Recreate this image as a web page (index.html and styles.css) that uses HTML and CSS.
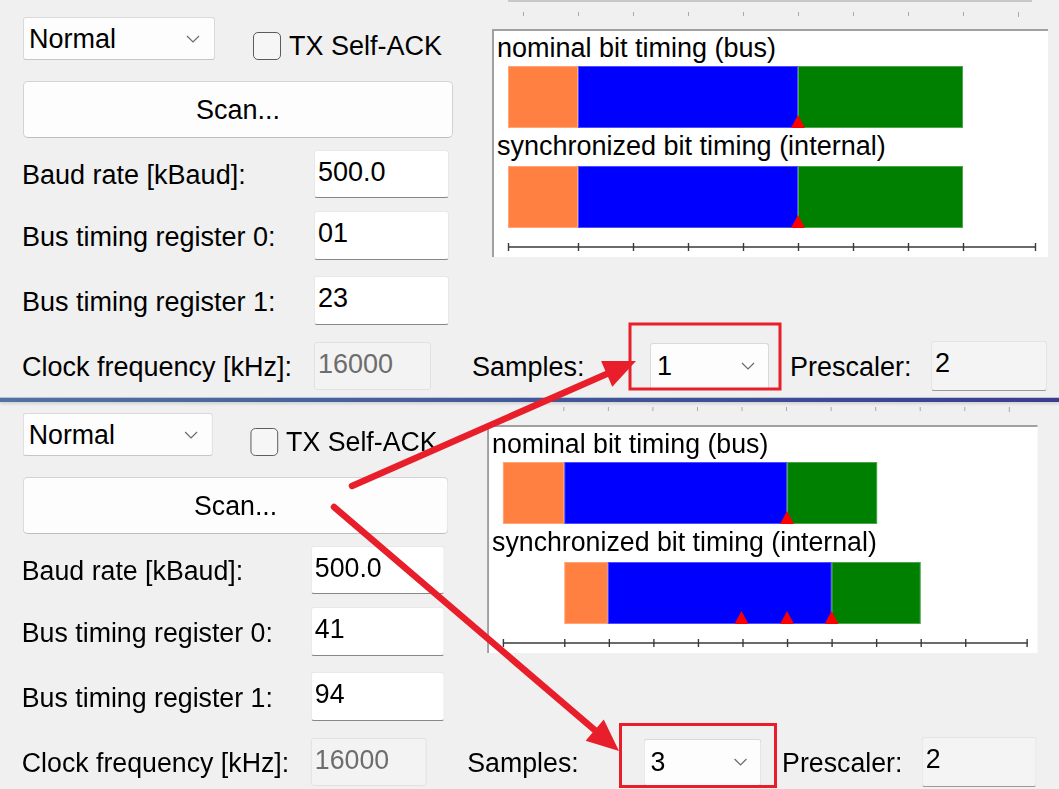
FILE: index.html
```html
<!DOCTYPE html>
<html lang="en">
<head>
<meta charset="utf-8">
<title>Bit timing</title>
<link rel="stylesheet" href="styles.css">
</head>
<body>
<main class="page">
  <section class="shot shot-a">
    <div class="upper">
      <div class="controls">
        <div class="mode-row">
          <div class="combo combo-mode"><span>Normal</span><svg class="chev" viewBox="0 0 14 8" width="14" height="8"><polyline points="1,1 7,7 13,1"/></svg></div>
          <div class="check"><span class="box"></span><span>TX Self-ACK</span></div>
        </div>
        <div class="scan">Scan...</div>
        <div class="field field-baud"><span class="lbl">Baud rate [kBaud]:</span><div class="input">500.0</div></div>
        <div class="field field-r0"><span class="lbl">Bus timing register 0:</span><div class="input">01</div></div>
        <div class="field field-r1"><span class="lbl">Bus timing register 1:</span><div class="input">23</div></div>
      </div>
      <div class="chart-col">
        <div class="slider">
          <div class="track"></div>
          <div class="ticks ticks-a"><i></i><i></i><i></i><i></i><i></i><i></i><i></i><i></i><i></i><i class="tall"></i></div>
        </div>
        <div class="chart">
          <div class="title">nominal bit timing (bus)</div>
          <div class="bar">
            <span class="seg seg-sync" style="width:70px"></span><span class="seg seg-prop" style="width:220px"></span><span class="seg seg-ps2" style="width:165px"></span>
            <span class="marker" style="left:283px"></span>
          </div>
          <div class="title title-2">synchronized bit timing (internal)</div>
          <div class="bar bar-2">
            <span class="seg seg-sync" style="width:70px"></span><span class="seg seg-prop" style="width:220px"></span><span class="seg seg-ps2" style="width:165px"></span>
            <span class="marker" style="left:283px"></span>
          </div>
          <svg class="axis" viewBox="0 0 554 16" width="554" height="16">
            <line x1="14" y1="8" x2="542" y2="8"/>
            <line x1="14.5" y1="4" x2="14.5" y2="12"/><line x1="84.5" y1="4" x2="84.5" y2="12"/><line x1="139.5" y1="4" x2="139.5" y2="12"/><line x1="194.5" y1="4" x2="194.5" y2="12"/><line x1="249.5" y1="4" x2="249.5" y2="12"/><line x1="304.5" y1="4" x2="304.5" y2="12"/><line x1="359.5" y1="4" x2="359.5" y2="12"/><line x1="414.5" y1="4" x2="414.5" y2="12"/><line x1="469.5" y1="4" x2="469.5" y2="12"/><line x1="541.5" y1="4" x2="541.5" y2="12"/>
          </svg>
        </div>
      </div>
    </div>
    <div class="bottom-row">
      <span class="lbl">Clock frequency [kHz]:</span>
      <div class="input input-disabled">16000</div>
      <span class="lbl-samples">Samples:</span>
      <div class="combo combo-samples"><span>1</span><svg class="chev" viewBox="0 0 14 8" width="14" height="8"><polyline points="1,1 7,7 13,1"/></svg></div>
      <span class="lbl-pre">Prescaler:</span>
      <div class="input input-readonly">2</div>
    </div>
  </section>

  <div class="divider"></div>

  <section class="shot shot-b">
    <div class="upper">
      <div class="controls">
        <div class="mode-row">
          <div class="combo combo-mode"><span>Normal</span><svg class="chev" viewBox="0 0 14 8" width="14" height="8"><polyline points="1,1 7,7 13,1"/></svg></div>
          <div class="check"><span class="box"></span><span>TX Self-ACK</span></div>
        </div>
        <div class="scan">Scan...</div>
        <div class="field field-baud"><span class="lbl">Baud rate [kBaud]:</span><div class="input">500.0</div></div>
        <div class="field field-r0"><span class="lbl">Bus timing register 0:</span><div class="input">41</div></div>
        <div class="field field-r1"><span class="lbl">Bus timing register 1:</span><div class="input">94</div></div>
      </div>
      <div class="chart-col">
        <div class="slider">
          <div class="ticks ticks-b"><i></i><i></i><i></i><i></i><i></i><i></i><i></i><i></i><i></i><i></i><i class="tall"></i></div>
        </div>
        <div class="chart">
          <div class="title">nominal bit timing (bus)</div>
          <div class="bar">
            <span class="seg seg-sync" style="width:62px"></span><span class="seg seg-prop" style="width:225px"></span><span class="seg seg-ps2" style="width:91px"></span>
            <span class="marker" style="left:280px"></span>
          </div>
          <div class="title title-2">synchronized bit timing (internal)</div>
          <div class="bar bar-2">
            <span class="spacer" style="width:62px"></span><span class="seg seg-sync" style="width:44px"></span><span class="seg seg-prop" style="width:226px"></span><span class="seg seg-ps2" style="width:90px"></span>
            <span class="marker" style="left:234px"></span>
            <span class="marker" style="left:280px"></span>
            <span class="marker" style="left:325px"></span>
          </div>
          <svg class="axis" viewBox="0 0 554 16" width="554" height="16">
            <line x1="14" y1="8" x2="544" y2="8"/>
            <line x1="14.5" y1="4" x2="14.5" y2="12"/><line x1="76.5" y1="4" x2="76.5" y2="12"/><line x1="121.5" y1="4" x2="121.5" y2="12"/><line x1="166.5" y1="4" x2="166.5" y2="12"/><line x1="211.5" y1="4" x2="211.5" y2="12"/><line x1="256.5" y1="4" x2="256.5" y2="12"/><line x1="301.5" y1="4" x2="301.5" y2="12"/><line x1="346.5" y1="4" x2="346.5" y2="12"/><line x1="391.5" y1="4" x2="391.5" y2="12"/><line x1="436.5" y1="4" x2="436.5" y2="12"/><line x1="481.5" y1="4" x2="481.5" y2="12"/><line x1="543.5" y1="4" x2="543.5" y2="12"/>
          </svg>
        </div>
      </div>
    </div>
    <div class="bottom-row">
      <span class="lbl">Clock frequency [kHz]:</span>
      <div class="input input-disabled">16000</div>
      <span class="lbl-samples">Samples:</span>
      <div class="combo combo-samples"><span>3</span><svg class="chev" viewBox="0 0 14 8" width="14" height="8"><polyline points="1,1 7,7 13,1"/></svg></div>
      <span class="lbl-pre">Prescaler:</span>
      <div class="input input-readonly">2</div>
    </div>
  </section>

  <svg class="annot" viewBox="0 0 1059 789" width="1059" height="789">
    <rect x="630" y="324" width="150" height="65"/>
    <rect x="620.5" y="724.5" width="155" height="62"/>
    <line class="shaft" x1="352" y1="486" x2="610" y2="372.5"/>
    <polygon points="636,361 612.3,386.7 601.1,361.1"/>
    <line class="shaft" x1="334" y1="507" x2="597" y2="732"/>
    <polygon points="619,751 585.6,740.8 603.8,719.6"/>
  </svg>
</main>
</body>
</html>
```

FILE: styles.css
```css
* {
  box-sizing: border-box;
  margin: 0;
  padding: 0;
}

html,
body {
  width: 1059px;
  height: 789px;
  overflow: hidden;
  background: #f0f0f0;
}

body {
  font-family: "Liberation Sans", Arial, sans-serif;
  font-size: 27px;
  color: #000;
}

.page {
  position: relative;
  width: 1059px;
  height: 789px;
}

/* ---------- a dialog capture ---------- */
.shot {
  height: 397px;
  overflow: hidden;
  padding-left: 22px;
}

.shot-b {
  height: 393px;
  margin-top: -6px;
  transform: scaleX(0.99);
  transform-origin: 0 0;
}

.upper {
  display: grid;
  grid-template-columns: 431px 556px;
  column-gap: 39px;
  align-items: start;
}

.controls {
  display: flex;
  flex-direction: column;
  padding-top: 17px;
}

.mode-row {
  display: flex;
  align-items: flex-start;
  height: 43px;
}

.combo {
  display: flex;
  align-items: center;
  justify-content: space-between;
  background: #fdfdfd;
  border: 1px solid #d9d9d9;
  border-bottom-color: #c6c6c6;
  border-radius: 3px;
  line-height: 30px;
}

.chev {
  display: block;
  flex: none;
}

.chev polyline {
  fill: none;
  stroke: #6a6a6a;
  stroke-width: 1.2;
}

.combo-mode {
  width: 192px;
  height: 43px;
  margin-left: 1px;
  padding: 0 14px 0 5px;
}

.check {
  display: flex;
  align-items: center;
  gap: 8px;
  margin: 14px 0 0 38px;
  line-height: 30px;
  white-space: nowrap;
}

.box {
  width: 28px;
  height: 28px;
  border: 1.5px solid #5c5c5c;
  border-radius: 5px;
  background: #f6f6f6;
}

.scan {
  display: flex;
  align-items: center;
  justify-content: center;
  width: 430px;
  height: 57px;
  margin: 21px 0 0 1px;
  background: #fdfdfd;
  border: 1px solid #d3d3d3;
  border-bottom-color: #bebebe;
  border-radius: 5px;
  line-height: 30px;
}

.field {
  display: flex;
  align-items: center;
  height: 49px;
}

.field-baud {
  height: 48px;
  margin-top: 12px;
}

.field-r0 {
  margin-top: 13px;
}

.field-r1 {
  margin-top: 16px;
}

.lbl {
  flex: none;
  width: 292px;
  line-height: 30px;
  white-space: nowrap;
  padding-top: 2px;
}

.input {
  flex: none;
  width: 135px;
  height: 100%;
  padding: 6px 0 0 3px;
  line-height: 30px;
  background: #fff;
  border: 1px solid #e8e8e8;
  border-bottom: 1px solid #878787;
  border-radius: 3px;
}

/* ---------- chart column ---------- */
.slider {
  display: flow-root;
  height: 29px;
}

.track {
  width: 524px;
  height: 2px;
  margin-left: 16px;
  background: #c8c8c8;
}

.ticks {
  display: flex;
  align-items: flex-start;
  margin-top: 10px;
}

.shot-b .ticks {
  margin-top: 11px;
}

.ticks i {
  display: block;
  width: 1px;
  height: 4px;
  background: #a9a9a9;
}

.ticks i.tall {
  height: 5px;
}

.ticks-a {
  padding-left: 31px;
  gap: 54px;
}

.ticks-b {
  padding-left: 77px;
  gap: 44px;
}

.chart {
  height: 228px;
  background: #fff;
  border-top: 2px solid #a0a0a0;
  border-left: 2px solid #a0a0a0;
  padding: 2px 0 0 3px;
}

.title {
  line-height: 30px;
  white-space: nowrap;
}

.title-2 {
  margin-top: 3px;
}

.bar {
  position: relative;
  display: flex;
  height: 62px;
  margin: 3px 0 0 11px;
}

.bar-2 {
  margin-top: 5px;
}

.seg,
.spacer {
  display: block;
  height: 100%;
  flex: none;
}

.seg {
  box-shadow: inset 0 0 0 1px rgba(255, 255, 255, 0.3);
}

.seg-sync {
  background: #ff8040;
}

.seg-prop {
  background: #0000ff;
}

.seg-ps2 {
  background: #008000;
}

.marker {
  position: absolute;
  bottom: 0;
  width: 0;
  height: 0;
  border-left: 7px solid transparent;
  border-right: 7px solid transparent;
  border-bottom: 13px solid #ff0000;
}

.axis {
  display: block;
  margin: 11px 0 0 -3px;
}

.axis line {
  stroke: #3a3a3a;
  stroke-width: 1.4;
}

/* ---------- bottom row ---------- */
.bottom-row {
  display: flex;
  align-items: center;
  height: 50px;
  margin-top: 16px;
}

.input-disabled {
  width: 117px;
  height: 48px;
  color: #6d6d6d;
  background: #f3f3f3;
  border: 1px solid #e1e1e1;
}

.lbl-samples {
  flex: none;
  width: 178px;
  margin-left: 41px;
  line-height: 30px;
  padding-top: 2px;
}

.combo-samples {
  flex: none;
  width: 119px;
  height: 47px;
  padding: 0 13px 0 6px;
}

.lbl-pre {
  flex: none;
  width: 141px;
  margin-left: 21px;
  line-height: 30px;
  padding-top: 2px;
}

.input-readonly {
  width: 116px;
  height: 50px;
  background: #f4f4f4;
  border: 1px solid #e4e4e4;
  border-bottom: 1px solid #9a9a9a;
}

/* ---------- separator between the two captures ---------- */
.divider {
  position: relative;
  z-index: 2;
  height: 5px;
  border-top: 1px solid #b9c3d8;
  background: linear-gradient(90deg, #52729f 0%, #42589a 50%, #3b3d8d 100%);
  box-shadow: 0 2px 3px rgba(0, 0, 0, 0.12);
}

/* ---------- red annotations ---------- */
.annot {
  position: absolute;
  top: 0;
  left: 0;
  z-index: 5;
  pointer-events: none;
}

.annot rect {
  fill: none;
  stroke: #e81f2a;
  stroke-width: 3;
}

.annot .shaft {
  stroke: #e81f2a;
  stroke-width: 6.5;
  stroke-linecap: round;
}

.annot polygon {
  fill: #e81f2a;
}
```
